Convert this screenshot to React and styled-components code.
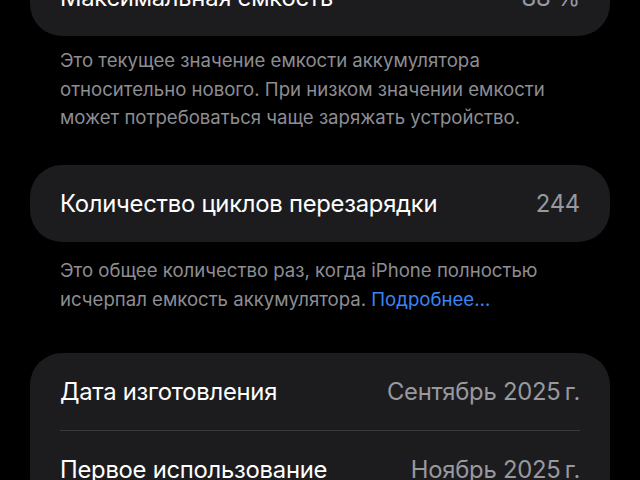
import React from "react";
import styled, { createGlobalStyle } from "styled-components";

const Global = createGlobalStyle`
  html, body { margin: 0; padding: 0; background: #000; }
  body { width: 640px; height: 480px; overflow: hidden; font-family: Inter, "Noto Sans", "Liberation Sans", sans-serif; }
`;

const Page = styled.div`
  display: flex;
  flex-direction: column;
  padding: 0 30px;
  margin-top: -41px;
`;

const Card = styled.div`
  background: #1c1c1e;
  border-radius: 32px;
  padding: 0 30px;
  display: flex;
  flex-direction: column;
`;

const Row = styled.div`
  height: 77px;
  display: flex;
  align-items: center;
  justify-content: space-between;
  border-top: ${(p) => (p.$divider ? "1px solid #38383a" : "none")};
`;

const Label = styled.span`
  color: #fff;
  font-size: 23.8px;
  letter-spacing: -0.25px;
`;

const Value = styled.span`
  color: #98989f;
  font-size: 23.8px;
  letter-spacing: -0.25px;
`;

const Footnote = styled.p`
  margin: 0;
  padding: ${(p) => p.$pt}px 30px 0;
  height: ${(p) => p.$h}px;
  box-sizing: border-box;
  color: #8d8d93;
  font-size: 18.6px;
  line-height: 28.5px;
  letter-spacing: 0;
`;

const Link = styled.span`
  color: #3a85f5;
`;

export default function App() {
  return (
    <>
      <Global />
      <Page>
        <Card>
          <Row>
            <Label>Максимальная емкость</Label>
            <Value>88 %</Value>
          </Row>
        </Card>
        <Footnote $pt={10} $h={129}>
          Это текущее значение емкости аккумулятора относительно нового. При низком значении емкости может потребоваться чаще заряжать устройство.
        </Footnote>
        <Card>
          <Row>
            <Label>Количество циклов перезарядки</Label>
            <Value>244</Value>
          </Row>
        </Card>
        <Footnote $pt={14} $h={111}>
          Это общее количество раз, когда iPhone полностью исчерпал емкость аккумулятора. <Link>Подробнее…</Link>
        </Footnote>
        <Card>
          <Row>
            <Label>Дата изготовления</Label>
            <Value>Сентябрь 2025{"\u202F"}г.</Value>
          </Row>
          <Row $divider>
            <Label>Первое использование</Label>
            <Value>Ноябрь 2025{"\u202F"}г.</Value>
          </Row>
        </Card>
      </Page>
    </>
  );
}
